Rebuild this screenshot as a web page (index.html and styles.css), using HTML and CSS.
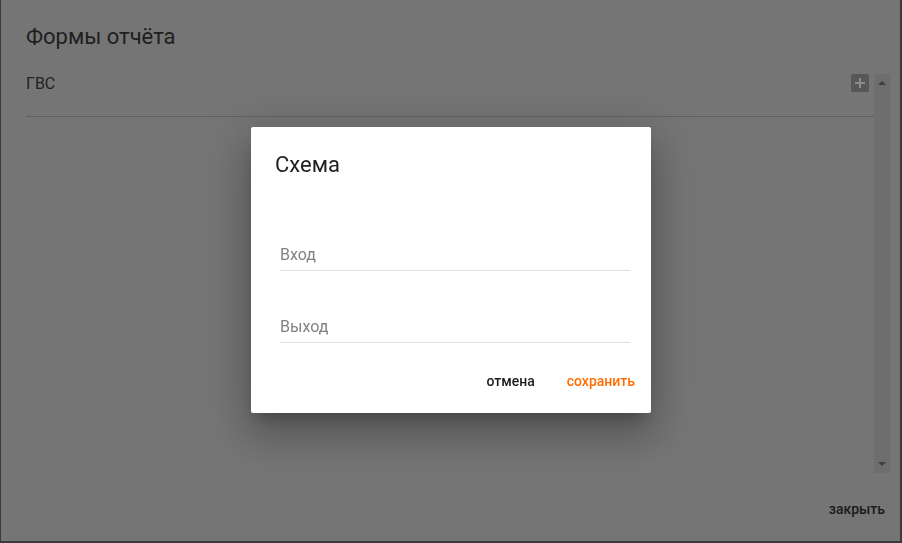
FILE: index.html
```html
<html>
<head>
    <link rel="stylesheet" href="styles.css">
<title>Формы отчёта</title>
</head>
<body>

<div class="window">
  <div class="window-title">Формы отчёта</div>

  <div class="list">
    <div class="list-items">
      <div class="list-row">
        <span class="row-name">ГВС</span>
        <button class="add-btn" title="Добавить">
          <svg width="12" height="12" viewBox="0 0 12 12"><path d="M6 1v10M1 6h10" stroke="#8c8c8c" stroke-width="2"/></svg>
        </button>
      </div>
    </div>
    <div class="scrollbar">
      <span class="arrow-up"></span>
      <span class="arrow-down"></span>
    </div>
  </div>

  <div class="window-actions">
    <button class="flat-btn">закрыть</button>
  </div>
</div>

<div class="backdrop">
  <div class="dialog">
    <div class="dialog-title">Схема</div>
    <form class="dialog-form" onsubmit="return false;">
      <input type="text" class="field" placeholder="Вход">
      <input type="text" class="field" placeholder="Выход">
    </form>
    <div class="dialog-actions">
      <button class="flat-btn">отмена</button>
      <button class="flat-btn accent">сохранить</button>
    </div>
  </div>
</div>

</body>
</html>
```

FILE: styles.css
```css
body {
  margin: 0;
  background-color: #3a3a3a;
  font-family: Roboto, "Liberation Sans", sans-serif;
}

/* outer window, already dimmed by the modal backdrop */
.window {
  box-sizing: border-box;
  width: 899px;
  height: 541px;
  margin-left: 1px;
  padding: 25px 10px 14px 25px;
  background-color: #757575;
  display: flex;
  flex-direction: column;
}
.window-title {
  font-size: 22px;
  line-height: 24px;
  color: #1f1f1f;
}

.list {
  margin-top: 25px;
  height: 399px;
  display: flex;
}
.list-items { flex: 1; }
.list-row {
  height: 42px;
  padding-right: 5px;
  border-bottom: 1px solid #5f5f5f;
  display: flex;
  justify-content: space-between;
  align-items: flex-start;
}
.row-name {
  font-size: 16px;
  line-height: 20px;
  color: #222;
}
.add-btn {
  width: 18px;
  height: 18px;
  padding: 0;
  border: none;
  border-radius: 2px;
  background-color: #575757;
  display: flex;
  align-items: center;
  justify-content: center;
}

.scrollbar {
  width: 16px;
  background-color: #6e6e6e;
  display: flex;
  flex-direction: column;
  justify-content: space-between;
  align-items: center;
  padding: 7px 0;
  box-sizing: border-box;
}
.arrow-up, .arrow-down {
  width: 0;
  height: 0;
  border-left: 4px solid transparent;
  border-right: 4px solid transparent;
}
.arrow-up { border-bottom: 4px solid #3e3e3e; }
.arrow-down { border-top: 4px solid #3e3e3e; }

.window-actions {
  margin-top: 18px;
  display: flex;
  justify-content: flex-end;
}

.flat-btn {
  font-family: Roboto, "Liberation Sans", sans-serif;
  font-size: 14px;
  font-weight: 500;
  line-height: 36px;
  height: 36px;
  padding: 0 8px;
  border: none;
  background: none;
  color: #1a1a1a;
}
.window-actions .flat-btn { margin-right: -3px; }

/* modal */
.backdrop {
  position: fixed;
  top: 0;
  left: 0;
  right: 0;
  bottom: 0;
  display: flex;
  align-items: center;
  justify-content: center;
  padding-bottom: 3px;
}
.dialog {
  box-sizing: border-box;
  width: 400px;
  height: 286px;
  padding: 24px 8px 14px 24px;
  background-color: #fff;
  border-radius: 2px;
  box-shadow: 0 11px 15px -7px rgba(0,0,0,.25), 0 24px 38px 3px rgba(0,0,0,.16), 0 9px 46px 8px rgba(0,0,0,.14);
}
.dialog-title {
  font-size: 22px;
  line-height: 28px;
  color: #212121;
}
.dialog-form {
  margin: 61px 13px 0 5px;
  display: flex;
  flex-direction: column;
  gap: 41px;
}
.field {
  box-sizing: border-box;
  font-family: Roboto, "Liberation Sans", sans-serif;
  font-size: 16px;
  line-height: 20px;
  height: 31px;
  padding: 4px 0 6px;
  border: none;
  border-bottom: 1px solid #e0e0e0;
  outline: none;
  color: #212121;
}
.field::placeholder { color: #828282; }

.dialog-actions {
  margin-top: 20px;
  display: flex;
  justify-content: flex-end;
  gap: 16px;
}
.accent { color: #ff6d00; }
```
